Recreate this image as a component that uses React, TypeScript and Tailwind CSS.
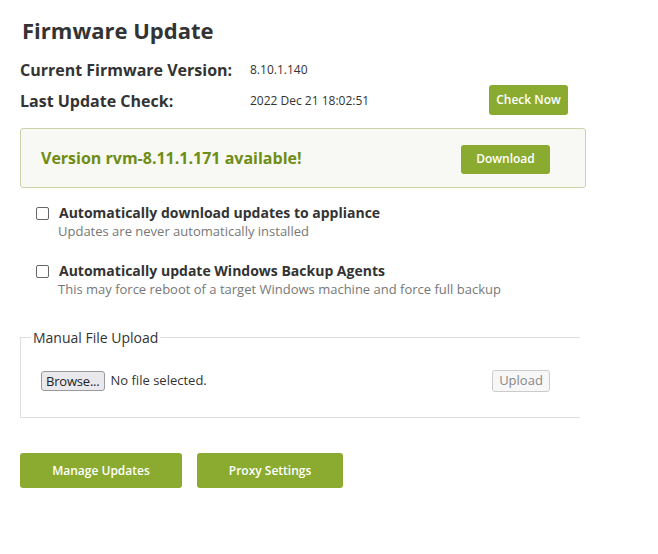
const font = { fontFamily: '"Open Sans", "Liberation Sans", sans-serif' };

function GreenButton({ children, className = "" }: { children: React.ReactNode; className?: string }) {
  return (
    <button
      className={`bg-[#8aab30] text-white font-semibold text-[12px] rounded-[3px] flex items-center justify-center ${className}`}
    >
      {children}
    </button>
  );
}

function Option({ title, hint }: { title: string; hint: string }) {
  return (
    <div className="flex items-start gap-[10px] pl-[16px]">
      <span className="mt-[4px] w-[13px] h-[13px] border-[1.5px] border-[#666] rounded-[2px] bg-white shrink-0" />
      <div>
        <div className="text-[14px] font-bold text-[#333] leading-[19px]">{title}</div>
        <div className="text-[13px] text-[#777] leading-[18px] -ml-[1px]">{hint}</div>
      </div>
    </div>
  );
}

export default function App() {
  return (
    <div style={font} className="w-[658px] h-[554px] bg-white text-[#333] pt-[15px] pl-[20px]">
      <h1 className="text-[22px] font-bold text-[#333] pl-[2px] leading-[30px]">Firmware Update</h1>

      <div className="mt-[12px] flex items-center h-[26px]">
        <div className="w-[230px] text-[16px] font-bold">Current Firmware Version:</div>
        <div className="text-[12px]">8.10.1.140</div>
      </div>
      <div className="mt-[2px] flex items-center h-[32px] w-[548px]">
        <div className="w-[230px] text-[16px] font-bold">Last Update Check:</div>
        <div className="text-[12px] flex-1">2022 Dec 21 18:02:51</div>
        <GreenButton className="w-[79px] h-[30px] -mt-[3px]">Check Now</GreenButton>
      </div>

      <div className="mt-[11px] w-[566px] h-[60px] border border-[#cbd4a8] rounded-[3px] bg-[#f8f9f4] flex items-center pl-[20px] pr-[35px] justify-between">
        <div className="text-[16px] font-bold text-[#6f8d14]">Version rvm-8.11.1.171 available!</div>
        <GreenButton className="w-[89px] h-[29px] mt-[2px]">Download</GreenButton>
      </div>

      <div className="mt-[15px] flex flex-col gap-[21px]">
        <Option title="Automatically download updates to appliance" hint="Updates are never automatically installed" />
        <Option
          title="Automatically update Windows Backup Agents"
          hint="This may force reboot of a target Windows machine and force full backup"
        />
      </div>

      <fieldset className="mt-[29px] w-[560px] h-[91px] border-t border-l border-b border-[#ddd] pl-[20px] pr-[30px]">
        <legend className="text-[14px] text-[#333] px-[2px] ml-[-10px]">Manual File Upload</legend>
        <div className="flex items-center justify-between mt-[22px]">
          <div className="flex items-center gap-[6px]">
            <button className="h-[20px] px-[4px] border border-[#999] rounded-[3px] bg-[#e9e9ed] text-[13px] text-[#222] leading-none tracking-[-0.2px]">
              Browse...
            </button>
            <span className="text-[13px] text-[#333]">No file selected.</span>
          </div>
          <button className="h-[22px] w-[58px] border border-[#ccc] rounded-[3px] bg-[#f7f7f7] text-[13px] text-[#888]">
            Upload
          </button>
        </div>
      </fieldset>

      <div className="mt-[35px] flex gap-[15px]">
        <GreenButton className="w-[162px] h-[35px]">Manage Updates</GreenButton>
        <GreenButton className="w-[146px] h-[35px]">Proxy Settings</GreenButton>
      </div>
    </div>
  );
}
